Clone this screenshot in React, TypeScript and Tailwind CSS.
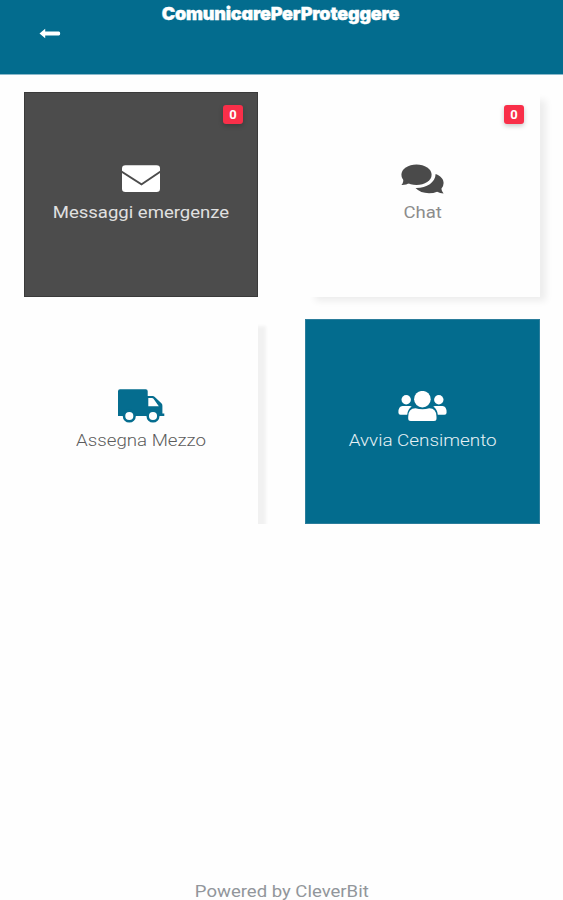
import React from "react";

const ArrowIcon = () => (
  <svg width="22" height="11" viewBox="0 0 22 11" fill="currentColor">
    <path d="M0.5 5.500 6.200 0.700v2.900h13.600q1.400 0 1.400 1.900t-1.400 1.900H6.200v2.900z" />
  </svg>
);

const MailIcon = () => (
  <svg width="40" height="28" viewBox="0 0 40 28" fill="currentColor" className="text-white">
    <path d="M4.500.3h31q3.500 0 3.500 3.200v2.300L20.500 18.300 1 5.800V3.500Q1 .3 4.500.3z" />
    <path d="M1 7.900 20.500 20.500 39 7.900V23.800q0 3.200-3.500 3.200h-31Q1 27 1 23.800z" />
  </svg>
);

const ChatIcon = () => (
  <svg width="43" height="31" viewBox="0 0 43 31" fill="currentColor" className="text-[#4a4a4a]">
    <ellipse cx="15.500" cy="10.700" rx="15.100" ry="10.200" />
    <path d="M2.300 14Q2.800 18.500.4 21 5 21.200 9 18.800z" />
    <path d="M34.600 10C40 12 42.600 15.400 42.600 19q0 3.300-2.200 5.700.3 2.800 2.200 4.900-3.500-.1-6.500-1.800Q32.500 29.300 28 29.300q-8.500 0-13.500-5.200C25 24.500 34.500 18.500 34.600 10z" />
  </svg>
);

const TruckIcon = () => (
  <svg width="47" height="35" viewBox="0 0 47 35" className="text-[#056d8f]">
    <path
      fill="currentColor"
      fillRule="evenodd"
      d="M2 .3h25.700q2 0 2 2V7h4.800q1.300 0 2.300 1l6.600 6.300q1 1 1 2.400v7.800h1.900v2.500H0V2.300Q0 .3 2 .3zM30.300 9v8.200h10.500L35.500 9.700q-.6-.7-1.500-.7z"
    />
    <circle cx="11.300" cy="27" r="5.300" fill="#fefefe" stroke="currentColor" strokeWidth="2.500" />
    <circle cx="35" cy="27" r="5.300" fill="#fefefe" stroke="currentColor" strokeWidth="2.500" />
  </svg>
);

const PeopleIcon = () => (
  <svg width="49" height="31" viewBox="0 0 49 31" fill="currentColor" className="text-white">
    <circle cx="8.200" cy="8.800" r="4.700" />
    <circle cx="40.800" cy="8.800" r="4.700" />
    <circle cx="24.400" cy="8.200" r="8.300" />
    <path d="M4.500 15h7.500q1 0 1.700.5-4 2.700-4.500 8.200H2.500Q.4 23.700.4 21.500 .4 15 4.500 15z" />
    <path d="M44.500 15H37q-1 0-1.700.5 4 2.700 4.500 8.200h6.700q2.100 0 2.100-2.200Q48.600 15 44.500 15z" />
    <path d="M17.500 17.200q7 2.100 13.800 0 7.200 0 7.200 8.500v1.800q0 2.500-2.500 2.500H12.700q-2.500 0-2.500-2.500v-1.800q0-8.500 7.300-8.500z" />
  </svg>
);

const Badge = ({ className, count }: { className: string; count: number }) => (
  <span
    className={`absolute flex h-[19px] w-5 items-center justify-center rounded-[3px] bg-[#f92f49] font-['Roboto',sans-serif] text-[13px] font-bold leading-none text-white shadow-[0_2px_5px_rgba(0,0,0,0.22)] ${className}`}
  >
    {count}
  </span>
);

const Label = ({ className, children }: { className: string; children: React.ReactNode }) => (
  <span className={`block whitespace-nowrap font-['Roboto',sans-serif] text-[17px] leading-[22px] ${className}`}>
    {children}
  </span>
);

const App = () => {
  return (
    <div className="flex h-[900px] w-[563px] flex-col overflow-hidden bg-[#fefefe]">
      <header className="relative h-[75px] shrink-0 border-b border-[#8ab8ca] bg-[#036c8e] text-center text-white">
        <h1 className="-ml-[2px] inline-block whitespace-nowrap font-['Inter',sans-serif] text-[18px] leading-[27px] font-black tracking-[-0.2px] [-webkit-text-stroke:0.4px_white] [font-feature-settings:'cv11','ss03']">
          ComunicarePerProteggere
        </h1>
        <button className="absolute top-[28px] left-[39px]" aria-label="Indietro">
          <ArrowIcon />
        </button>
      </header>

      {/* Dashboard tiles, the second row cuts its shadows at the bottom */}
      <main className="grid h-[449px] shrink-0 grid-cols-[234px_235px] grid-rows-[205px_205px] gap-x-[47px] gap-y-[22px] overflow-hidden pt-[17px] pl-6">
        <div className="relative flex flex-col items-center border border-[#3a3a3a] bg-[#4c4c4c] pt-[72px] text-[#e0e0e0]">
          <Badge className="top-3 right-[14px]" count={0} />
          <MailIcon />
          <Label className="mt-2 scale-x-[1.09]">Messaggi emergenze</Label>
        </div>

        <div className="relative flex flex-col items-center bg-[#fefefe] pt-[72px] text-[#8c8c8c] shadow-[8px_6px_7px_-2px_rgba(0,0,0,0.07)]">
          <Badge className="top-[13px] right-4" count={0} />
          <ChatIcon />
          <Label className="mt-[6px] scale-x-[1.09]">Chat</Label>
        </div>

        <div className="relative flex flex-col items-center bg-[#fefefe] pt-[70px] text-[#5c5c5c] shadow-[9px_6px_3px_-1px_rgba(0,0,0,0.05)]">
          <TruckIcon />
          <Label className="mt-[5px] scale-x-[1.10] font-light">Assegna Mezzo</Label>
        </div>

        <div className="relative flex flex-col items-center border border-[#2b7d9b] bg-[#036c8e] pt-[71px] text-[#e6f1f5]">
          <PeopleIcon />
          <Label className="mt-[7px] scale-x-[1.11] font-light">Avvia Censimento</Label>
        </div>
      </main>

      <footer className="mt-auto flex justify-center text-[#92969b]">
        <Label className="-mb-[2px] scale-x-[1.09]">Powered by CleverBit</Label>
      </footer>
    </div>
  );
};

export default App;
